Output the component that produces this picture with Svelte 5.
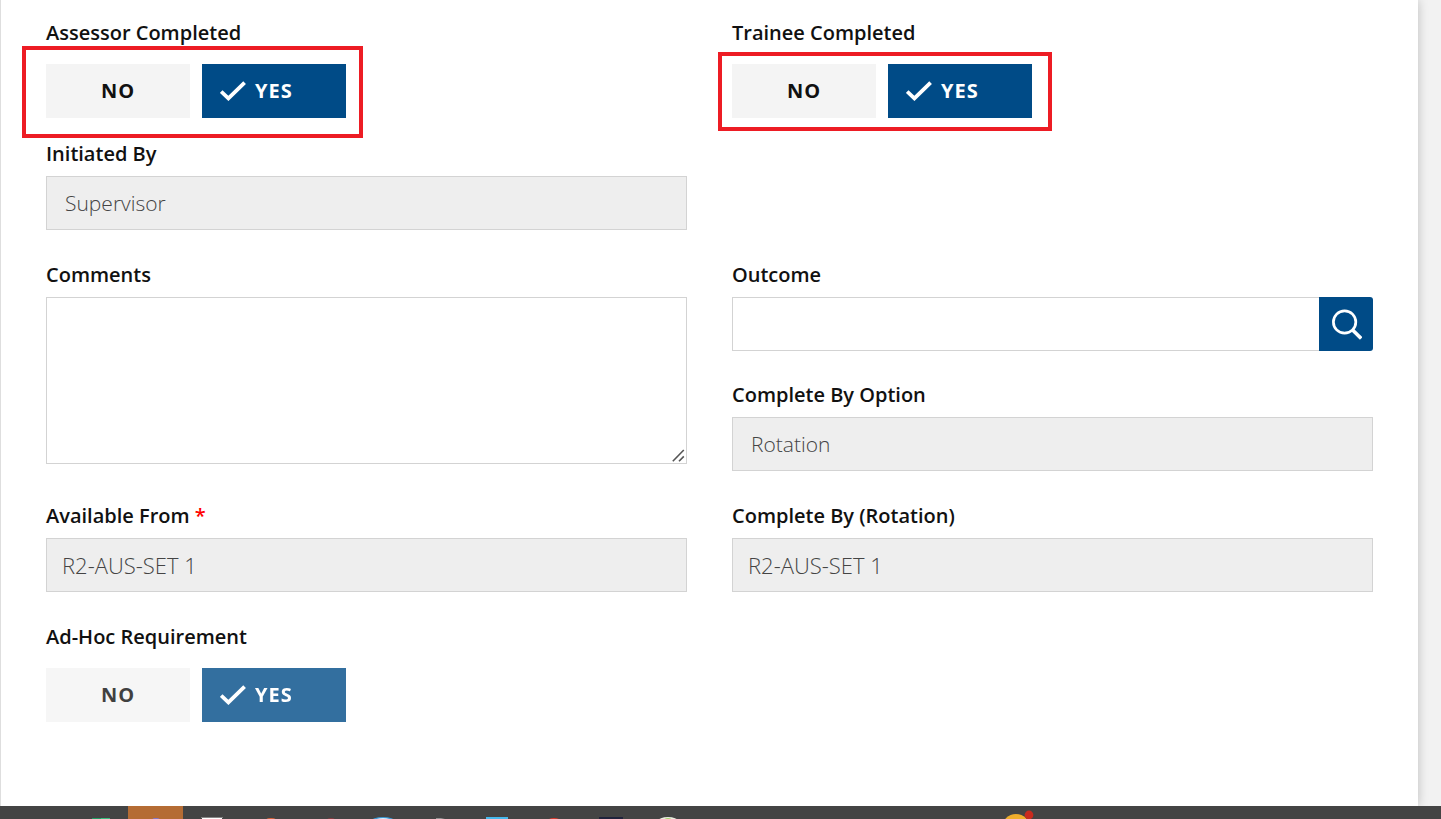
<script lang="ts">
  let assessor = $state('yes');
  let trainee = $state('yes');
  let adhoc = $state('yes');
  let comments = $state('');
  let outcome = $state('');
</script>

{#snippet check()}
  <svg class="check" viewBox="0 0 26 20" aria-hidden="true">
    <path d="M1.2 10.6 L8.4 17.4 L24.6 1.6" fill="none" stroke="currentColor" stroke-width="3.8" />
  </svg>
{/snippet}

<div class="page">
  <main class="panel">
    <form class="form">
      <fieldset class="field">
        <legend class="label">Assessor Completed</legend>
        <div class="toggles">
          <label class="toggle" class:on={assessor === 'no'}>
            <input type="radio" name="assessor" value="no" bind:group={assessor} />
            <span>NO</span>
          </label>
          <label class="toggle" class:on={assessor === 'yes'}>
            <input type="radio" name="assessor" value="yes" bind:group={assessor} />
            {@render check()}<span>YES</span>
          </label>
          <div class="mark mark-assessor"></div>
        </div>
      </fieldset>

      <fieldset class="field">
        <legend class="label">Trainee Completed</legend>
        <div class="toggles">
          <label class="toggle" class:on={trainee === 'no'}>
            <input type="radio" name="trainee" value="no" bind:group={trainee} />
            <span>NO</span>
          </label>
          <label class="toggle" class:on={trainee === 'yes'}>
            <input type="radio" name="trainee" value="yes" bind:group={trainee} />
            {@render check()}<span>YES</span>
          </label>
          <div class="mark mark-trainee"></div>
        </div>
      </fieldset>

      <div class="field first-column">
        <label class="label" for="initiated">Initiated By</label>
        <select id="initiated" class="control" disabled>
          <option>Supervisor</option>
        </select>
      </div>

      <div class="field first-column">
        <label class="label" for="comments">Comments</label>
        <div class="resizable">
          <textarea id="comments" class="control" bind:value={comments}></textarea>
          <svg class="grip" viewBox="0 0 13 13" aria-hidden="true">
            <path d="M0.8 12.2 L11.8 1 M7 12.2 L11.8 7.4" fill="none" stroke="#555555" stroke-width="1.6" />
          </svg>
        </div>
      </div>

      <div class="stack">
        <div class="field">
          <label class="label" for="outcome">Outcome</label>
          <div class="lookup">
            <input id="outcome" class="control" type="text" bind:value={outcome} />
            <button type="button" class="search" aria-label="Search">
              <svg viewBox="0 0 32 32" aria-hidden="true">
                <circle cx="14.6" cy="14" r="11.2" fill="none" stroke="currentColor" stroke-width="2.7" />
                <path d="M22.6 22 L31.2 30.6" fill="none" stroke="currentColor" stroke-width="3.6" />
              </svg>
            </button>
          </div>
        </div>
        <div class="field">
          <label class="label" for="option">Complete By Option</label>
          <select id="option" class="control" disabled>
            <option>Rotation</option>
          </select>
        </div>
      </div>

      <div class="field">
        <label class="label" for="available">Available From <span class="required">*</span></label>
        <input id="available" class="control large" type="text" value="R2-AUS-SET 1" disabled />
      </div>

      <div class="field">
        <label class="label" for="rotation">Complete By (Rotation)</label>
        <input id="rotation" class="control large" type="text" value="R2-AUS-SET 1" disabled />
      </div>

      <fieldset class="field" disabled>
        <legend class="label">Ad-Hoc Requirement</legend>
        <div class="toggles dim">
          <label class="toggle" class:on={adhoc === 'no'}>
            <input type="radio" name="adhoc" value="no" bind:group={adhoc} />
            <span>NO</span>
          </label>
          <label class="toggle" class:on={adhoc === 'yes'}>
            <input type="radio" name="adhoc" value="yes" bind:group={adhoc} />
            {@render check()}<span>YES</span>
          </label>
        </div>
      </fieldset>
    </form>
  </main>

  <footer class="taskbar">
    <svg width="1441" height="13" viewBox="0 0 1441 13" aria-hidden="true">
      <rect x="128" width="55" height="13" fill="#b56c34" />
      <rect x="92" y="12" width="9" height="1" fill="#1f9d63" />
      <rect x="101" y="12" width="9" height="1" fill="#35bd7d" />
      <ellipse cx="156" cy="14" rx="4" ry="2" fill="#7f78d8" />
      <rect x="201" y="11" width="22" height="1" fill="#858585" />
      <rect x="202" y="12" width="20" height="1" fill="#ffffff" />
      <ellipse cx="271" cy="14" rx="5" ry="2" fill="#dc6237" />
      <ellipse cx="331" cy="14" rx="4" ry="2" fill="#873b40" />
      <ellipse cx="383" cy="15" rx="12" ry="4" fill="#3c9bd8" />
      <ellipse cx="383" cy="15" rx="9" ry="3" fill="#d9efff" />
      <path d="M436 12h5l4 1h-9z" fill="#929292" />
      <rect x="486" y="11" width="22" height="2" fill="#46b9ee" />
      <ellipse cx="554" cy="15" rx="7" ry="3" fill="#e03a2c" />
      <rect x="599" y="11" width="24" height="2" fill="#20233c" />
      <ellipse cx="668" cy="15" rx="10" ry="4" fill="#e9eee0" />
      <ellipse cx="668" cy="15" rx="5" ry="3" fill="#a9d36b" />
      <circle cx="1016" cy="22" r="14" fill="#f1ae2c" />
      <circle cx="1029" cy="9" r="4.4" fill="#c92a1e" />
    </svg>
  </footer>
</div>

<style>
  :global(body) {
    margin: 0;
  }
  .page {
    display: flex;
    flex-direction: column;
    min-height: 100vh;
    background: #f2f2f2;
    color: #111111;
    font-family: 'Open Sans', sans-serif;
  }
  .page :global(*) {
    box-sizing: border-box;
  }
  .panel {
    flex: 1;
    margin-right: 23px;
    padding: 20px 45px 32px;
    border-left: 1px solid #dedede;
    background: #ffffff;
    box-shadow: 0 0 10px rgba(0, 0, 0, 0.22);
  }
  .form {
    display: grid;
    grid-template-columns: 1fr 1fr;
    column-gap: 45px;
    row-gap: 32px;
  }
  .field {
    display: flex;
    flex-direction: column;
    min-width: 0;
    margin: 0;
    padding: 0;
    border: 0;
  }
  .first-column {
    grid-column: 1;
  }
  .stack {
    display: flex;
    flex-direction: column;
    gap: 31px;
  }
  .label {
    padding: 0 0 9px;
    font-size: 20px;
    font-weight: 640;
    line-height: 26px;
  }
  .required {
    color: #ff0000;
  }
  .control {
    appearance: none;
    width: 100%;
    height: 54px;
    margin: 0;
    padding: 0 18px;
    border: 1px solid #d3d3d3;
    border-radius: 0;
    background: #ffffff;
    color: #444444;
    font-family: inherit;
    font-size: 21px;
    font-weight: 300;
    line-height: 30px;
  }
  .control:disabled {
    background: #eeeeee;
    opacity: 1;
  }
  .large {
    padding: 0 15px;
    font-size: 22px;
  }
  .resizable {
    position: relative;
    display: flex;
  }
  textarea.control {
    height: 167px;
    padding: 10px 18px;
    resize: none;
  }
  .grip {
    position: absolute;
    right: 2px;
    bottom: 2px;
    width: 13px;
    height: 13px;
  }
  .lookup {
    display: flex;
  }
  .lookup .control {
    flex: 1;
    border-right: 0;
  }
  .search {
    display: grid;
    place-items: center;
    flex: none;
    width: 54px;
    height: 54px;
    padding: 0;
    border: 0;
    border-radius: 0 3px 3px 0;
    background: #004b87;
    color: #ffffff;
  }
  .search svg {
    width: 32px;
    height: 32px;
  }
  .toggles {
    position: relative;
    display: flex;
    gap: 12px;
    align-self: flex-start;
    width: max-content;
    margin: 9px 0 -9px;
  }
  .toggle {
    display: flex;
    align-items: center;
    justify-content: center;
    width: 144px;
    height: 54px;
    background: #f4f4f4;
    font-size: 20px;
    font-weight: 700;
    letter-spacing: 1px;
  }
  .toggle span {
    padding-bottom: 2px;
  }
  .toggle input {
    position: absolute;
    width: 1px;
    height: 1px;
    margin: 0;
    opacity: 0;
  }
  .toggle.on {
    justify-content: flex-start;
    gap: 9px;
    padding-left: 18px;
    background: #004b87;
    color: #ffffff;
  }
  .dim {
    opacity: 0.8;
  }
  .dim .check,
  .dim span {
    color: inherit;
  }
  .check {
    width: 26px;
    height: 20px;
  }
  .mark {
    position: absolute;
    border: 4px solid #ed1c24;
    pointer-events: none;
  }
  .mark-assessor {
    inset: -18px -17px -20px -24px;
  }
  .mark-trainee {
    inset: -12px -20px -13px -14px;
  }
  .taskbar {
    position: relative;
    height: 13px;
    overflow: hidden;
    background: #444444;
  }
  .taskbar svg {
    display: block;
  }
</style>
